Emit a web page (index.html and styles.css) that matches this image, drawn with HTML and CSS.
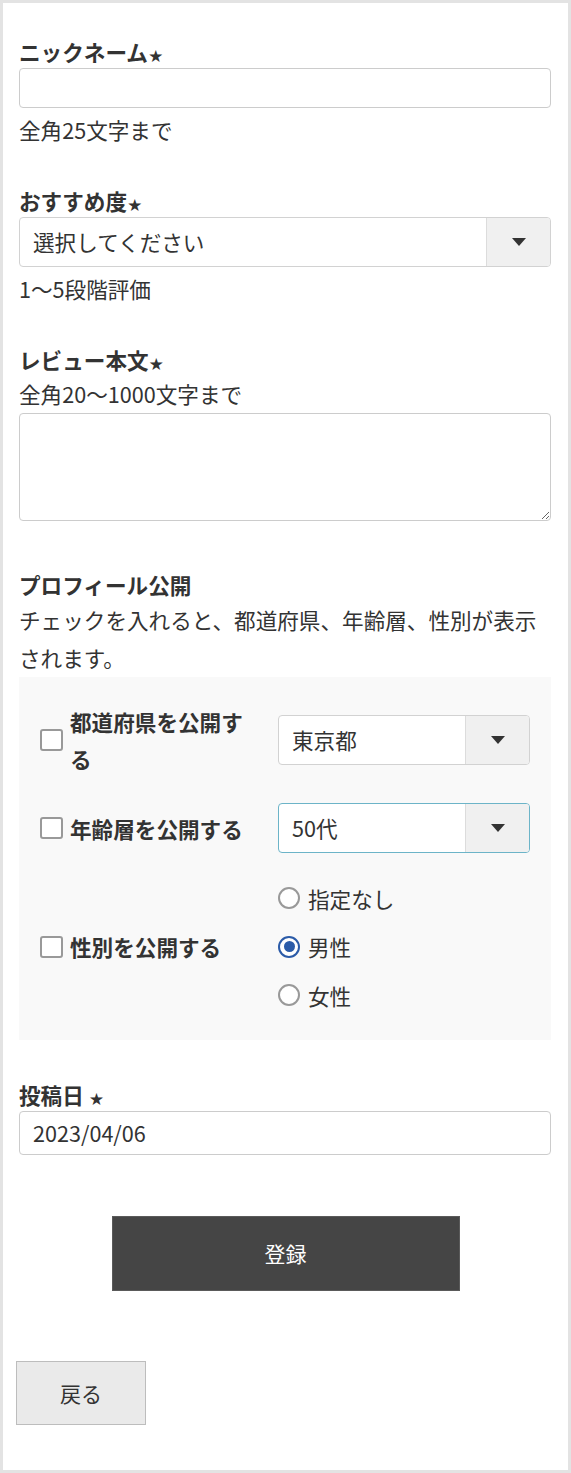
FILE: index.html
```html
<!DOCTYPE html>
<html lang="ja">
<head>
<meta charset="utf-8">
<title>レビュー投稿</title>
<link rel="stylesheet" href="styles.css">
</head>
<body>
<div class="page">
  <div class="field">
    <div class="label">ニックネーム<span class="req">★</span></div>
    <input class="text-input" type="text">
    <div class="hint">全角25文字まで</div>
  </div>

  <div class="field">
    <div class="label">おすすめ度<span class="req">★</span></div>
    <div class="select">
      <span class="select-value">選択してください</span>
      <span class="select-arrow"><span class="tri"></span></span>
    </div>
    <div class="hint">1〜5段階評価</div>
  </div>

  <div class="field field-review">
    <div class="label">レビュー本文<span class="req">★</span></div>
    <div class="hint hint-top">全角20〜1000文字まで</div>
    <textarea class="textarea"></textarea>
  </div>

  <div class="field">
    <div class="label">プロフィール公開</div>
    <p class="desc">チェックを入れると、都道府県、年齢層、性別が表示されます。</p>
    <div class="profile-box">
      <div class="row row-pref">
        <label class="check">
          <span class="box"></span>
          <span class="check-text">都道府県を公開する</span>
        </label>
        <div class="select">
          <span class="select-value">東京都</span>
          <span class="select-arrow"><span class="tri"></span></span>
        </div>
      </div>
      <div class="row row-age">
        <label class="check">
          <span class="box"></span>
          <span class="check-text">年齢層を公開する</span>
        </label>
        <div class="select select-focus">
          <span class="select-value">50代</span>
          <span class="select-arrow"><span class="tri"></span></span>
        </div>
      </div>
      <div class="row row-gender">
        <label class="check">
          <span class="box"></span>
          <span class="check-text">性別を公開する</span>
        </label>
        <div class="radios">
          <div class="radio"><span class="circle"></span><span>指定なし</span></div>
          <div class="radio"><span class="circle checked"></span><span>男性</span></div>
          <div class="radio"><span class="circle"></span><span>女性</span></div>
        </div>
      </div>
    </div>
  </div>

  <div class="field field-date">
    <div class="label">投稿日 <span class="req">★</span></div>
    <div class="date-input">2023/04/06</div>
  </div>

  <div class="actions">
    <button class="btn-submit" type="button">登録</button>
  </div>

  <button class="btn-back" type="button">戻る</button>
</div>
</body>
</html>
```

FILE: styles.css
```css
* {
  box-sizing: border-box;
}

html, body {
  margin: 0;
  padding: 0;
  background: #ffffff;
}

body {
  font-family: "Noto Sans CJK JP", "Noto Sans", sans-serif;
  font-size: 21.6px;
  color: #333333;
}

.page {
  width: 571px;
  min-height: 1473px;
  border: 3px solid #e3e3e3;
  padding: 33px 17px 43px 16px;
}

.field {
  margin-bottom: 39px;
}

.field-review {
  margin-bottom: 48px;
}

.label {
  font-weight: 700;
  line-height: 32px;
  height: 32px;
  white-space: nowrap;
}

.req {
  font-size: 13.5px;
  margin-left: 1px;
  vertical-align: baseline;
}

.hint {
  margin-top: 6px;
  line-height: 32px;
}

.hint-top {
  margin-top: 2px;
}

.text-input {
  display: block;
  width: 100%;
  height: 40px;
  border: 1px solid #cccccc;
  border-radius: 4px;
  background: #fff;
  font: inherit;
  padding: 0 13px;
  margin: 0;
}

.select {
  display: flex;
  height: 50px;
  border: 1px solid #d2d2d2;
  border-radius: 4px;
  background: #fff;
  overflow: hidden;
}

.select-focus {
  border-color: #6cb4c8;
}

.select-value {
  flex: 1;
  display: flex;
  align-items: center;
  padding-left: 13px;
  line-height: 1;
}

.select-arrow {
  width: 64px;
  display: flex;
  align-items: center;
  justify-content: center;
  background: #f0f0f0;
  border-left: 1px solid #dcdcdc;
}

.tri {
  width: 0;
  height: 0;
  border-left: 7.5px solid transparent;
  border-right: 7.5px solid transparent;
  border-top: 8px solid #333333;
}

.textarea {
  display: block;
  width: 100%;
  height: 108px;
  margin: 3px 0 0;
  border: 1px solid #cccccc;
  border-radius: 4px;
  font: inherit;
  padding: 6px 13px;
  background: #fff;
  resize: both;
}

.desc {
  margin: 0;
  line-height: 38px;
}

.profile-box {
  background: #f9f9f9;
  padding: 26px 21px 20px 21px;
  display: flex;
  flex-direction: column;
}

.row {
  display: grid;
  grid-template-columns: 218px 252px;
  column-gap: 20px;
  align-items: center;
}

.row-age {
  margin-top: 26px;
}

.row-gender {
  margin-top: 21px;
}

.check {
  display: flex;
  align-items: center;
  gap: 7px;
  font-weight: 700;
  line-height: 37px;
}

.box {
  flex: none;
  width: 23px;
  height: 22px;
  border: 2px solid #999999;
  border-radius: 3px;
  background: #fff;
}

.check-text {
  flex: 1;
}

.radios {
  display: flex;
  flex-direction: column;
}

.radio {
  display: flex;
  align-items: center;
  gap: 8px;
  height: 48.5px;
}

.circle {
  flex: none;
  width: 22px;
  height: 22px;
  border: 2px solid #999999;
  border-radius: 50%;
  background: #fff;
  display: flex;
  align-items: center;
  justify-content: center;
}

.circle.checked {
  border-color: #2b5ba8;
  border-width: 2.5px;
}

.circle.checked::after {
  content: "";
  width: 11px;
  height: 11px;
  border-radius: 50%;
  background: #2b5ba8;
}

.date-input {
  height: 44px;
  border: 1px solid #cccccc;
  border-radius: 4px;
  display: flex;
  align-items: center;
  padding-left: 13px;
  background: #fff;
}

.actions {
  margin-top: 61px;
  display: flex;
  justify-content: center;
  margin-left: -16px;
  margin-right: -17px;
}

.btn-submit {
  width: 348px;
  height: 75px;
  background: #454545;
  color: #ffffff;
  border: 1px solid #5a5a5a;
  font: inherit;
  font-size: 21px;
  padding: 0;
}

.btn-back {
  display: block;
  margin-top: 70px;
  margin-left: -3px;
  width: 130px;
  height: 64px;
  background: #eaeaea;
  border: 1px solid #bdbdbd;
  color: #333333;
  font: inherit;
  font-size: 21px;
  padding: 0;
}
```
